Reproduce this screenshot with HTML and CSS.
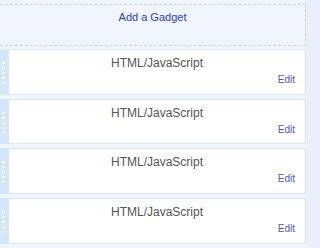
FILE: index.html
```html
<!DOCTYPE html>
<html>
<head>
<meta charset="utf-8">
<link rel="stylesheet" href="styles.css">
</head>
<body>
<div class="page">
  <div class="column">
    <div class="add-gadget"><a class="add-link">Add a Gadget</a></div>
    <div class="widget">
      <div class="handle"><i></i><i></i><i></i><i></i><i></i></div>
      <div class="body"><div class="title">HTML/JavaScript</div><div class="edit">Edit</div></div>
    </div>
    <div class="widget">
      <div class="handle"><i></i><i></i><i></i><i></i><i></i></div>
      <div class="body"><div class="title">HTML/JavaScript</div><div class="edit">Edit</div></div>
    </div>
    <div class="widget">
      <div class="handle"><i></i><i></i><i></i><i></i><i></i></div>
      <div class="body"><div class="title">HTML/JavaScript</div><div class="edit">Edit</div></div>
    </div>
    <div class="widget">
      <div class="handle"><i></i><i></i><i></i><i></i><i></i></div>
      <div class="body"><div class="title">HTML/JavaScript</div><div class="edit">Edit</div></div>
    </div>
  </div>
</div>
</body>
</html>
```
FILE: styles.css
```css
html, body {
  margin: 0;
  padding: 0;
  background: #e9f0fc;
  font-family: "Liberation Sans", Arial, sans-serif;
}
.page {
  display: flex;
  height: 248px;
  overflow: hidden;
}
.column {
  width: 306px;
  background: #f0f5fe;
  padding-top: 4px;
  display: flex;
  flex-direction: column;
}
.add-gadget {
  border: 1px dashed #c6d6f6;
  border-left: none;
  padding-top: 2px;
  box-sizing: border-box;
  height: 42px;
  text-align: center;
  margin-bottom: 3px;
}
.add-link {
  font-size: 11px;
  line-height: 13px;
  color: #2a3fcc;
  display: inline-block;
}
.widget {
  display: flex;
  height: 46px;
  box-sizing: border-box;
  margin-bottom: 4px;
  border: 1px solid #d7e6f9;
  border-left: none;
  background: #fff;
}
.handle {
  width: 9px;
  background: #d3e6fc;
  display: flex;
  flex-direction: column;
  gap: 3px;
  padding: 12px 0 0 2px;
  box-sizing: border-box;
}
.handle i {
  display: block;
  width: 3px;
  height: 2px;
  background: #f7faff;
}
.body {
  flex: 1;
  display: flex;
  flex-direction: column;
  padding-top: 6px;
}
.title {
  text-align: center;
  font-size: 12px;
  line-height: 14px;
  color: #555;
}
.edit {
  align-self: flex-end;
  margin-top: 4px;
  margin-right: 10px;
  font-size: 10px;
  line-height: 12px;
  color: #5157b8;
}
```
